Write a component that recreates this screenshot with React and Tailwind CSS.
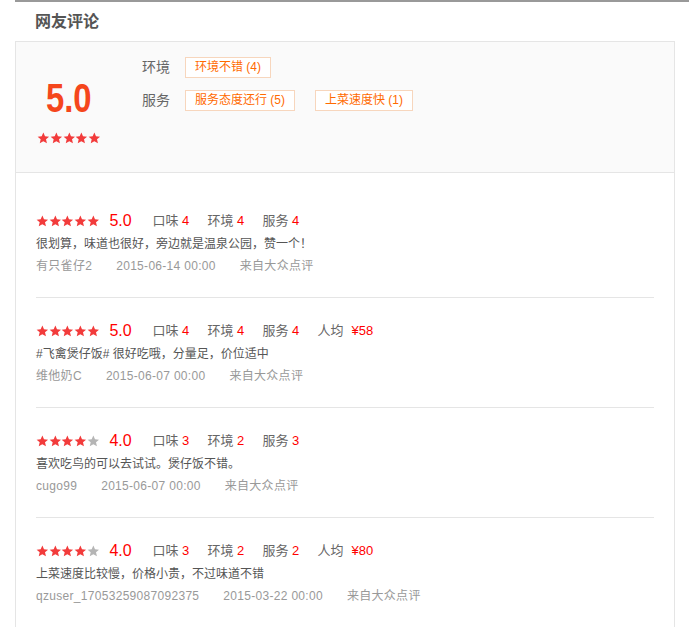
const reviews = [
  {
    stars: 5,
    score: '5.0',
    taste: 4,
    env: 4,
    service: 4,
    price: null,
    text: '很划算，味道也很好，旁边就是温泉公园，赞一个！',
    user: '有只雀仔2',
    date: '2015-06-14 00:00',
  },
  {
    stars: 5,
    score: '5.0',
    taste: 4,
    env: 4,
    service: 4,
    price: '¥58',
    text: '#飞禽煲仔饭# 很好吃哦，分量足，价位适中',
    user: '维他奶C',
    date: '2015-06-07 00:00',
  },
  {
    stars: 4,
    score: '4.0',
    taste: 3,
    env: 2,
    service: 3,
    price: null,
    text: '喜欢吃鸟的可以去试试。煲仔饭不错。',
    user: 'cugo99',
    date: '2015-06-07 00:00',
  },
  {
    stars: 4,
    score: '4.0',
    taste: 3,
    env: 2,
    service: 2,
    price: '¥80',
    text: '上菜速度比较慢，价格小贵，不过味道不错',
    user: 'qzuser_17053259087092375',
    date: '2015-03-22 00:00',
  },
];

function Star({ on }) {
  return (
    <svg viewBox="0 0 24 24" className="w-[12.7px] h-[12.5px] shrink-0">
      <path
        d="M12 1l3.2 7.2 7.8.7-5.9 5.1 1.8 7.8L12 17.7l-6.9 4.1 1.8-7.8L1 8.9l7.8-.7z"
        fill={on ? '#f23b3b' : '#b5b5b5'}
      />
    </svg>
  );
}

function Stars({ count }) {
  return (
    <div className="flex items-center">
      {[1, 2, 3, 4, 5].map((i) => (
        <Star key={i} on={i <= count} />
      ))}
    </div>
  );
}

function Tag({ children }) {
  return (
    <span className="h-[21px] px-[9px] border border-[#f7d6bd] bg-white text-[#ff6a00] text-[12px] leading-[19px] whitespace-nowrap">
      {children}
    </span>
  );
}

function Rate({ label, value }) {
  return (
    <span className="w-[55px] shrink-0 text-[13px] text-[#666] whitespace-nowrap">
      {label} <span className="text-[#f00]">{value}</span>
    </span>
  );
}

export default function App() {
  return (
    <div className="min-h-screen bg-white pl-[15px] font-['Liberation_Sans','Noto_Sans_CJK_SC',sans-serif]">
      <div className="border-t-2 border-[#999]" />

      {/* title */}
      <div className="h-[39px] flex items-center pl-[20px] text-[16px] font-bold text-[#555]">
        网友评论
      </div>

      <div className="w-[660px] border-x border-t border-[#e5e5e5]">
        {/* summary */}
        <div className="h-[131px] bg-[#fafafa] border-b border-[#e5e5e5] flex">
          <div className="pl-[21px] pt-[36px] flex flex-col items-center w-[85px]">
            <span className="inline-block text-[40px] leading-none font-bold text-[#f5461c] scale-x-[0.82]">
              5.0
            </span>
            <div className="mt-[14px]">
              <Stars count={5} />
            </div>
          </div>

          <div className="ml-[41px] pt-[15px] flex flex-col gap-[12px]">
            <div className="flex items-center">
              <span className="w-[43px] text-[14px] text-[#666]">环境</span>
              <Tag>环境不错 (4)</Tag>
            </div>
            <div className="flex items-center gap-[20px]">
              <div className="flex items-center">
                <span className="w-[43px] text-[14px] text-[#666]">服务</span>
                <Tag>服务态度还行 (5)</Tag>
              </div>
              <Tag>上菜速度快 (1)</Tag>
            </div>
          </div>
        </div>

        {/* reviews */}
        <div className="pt-[15px] px-[20px]">
          {reviews.map((r, i) => (
            <div
              key={i}
              className={`pt-[21px] pb-[20px] ${i < reviews.length - 1 ? 'border-b border-[#e5e5e5]' : ''}`}
            >
              <div className="h-6 flex items-center">
                <Stars count={r.stars} />
                <span className="ml-[10px] w-[43px] text-[16px] text-[#f00]">{r.score}</span>
                <Rate label="口味" value={r.taste} />
                <Rate label="环境" value={r.env} />
                <Rate label="服务" value={r.service} />
                {r.price && (
                  <span className="text-[13px] text-[#666] whitespace-nowrap">
                    人均<span className="ml-[8px] text-[#f00]">{r.price}</span>
                  </span>
                )}
              </div>
              <div className="h-[22px] flex items-center text-[12px] text-[#555]">{r.text}</div>
              <div className="h-[22px] flex items-center gap-[24px] text-[12px] text-[#999] tracking-[0.3px]">
                <span>{r.user}</span>
                <span>{r.date}</span>
                <span>来自大众点评</span>
              </div>
            </div>
          ))}
        </div>
      </div>
    </div>
  );
}
